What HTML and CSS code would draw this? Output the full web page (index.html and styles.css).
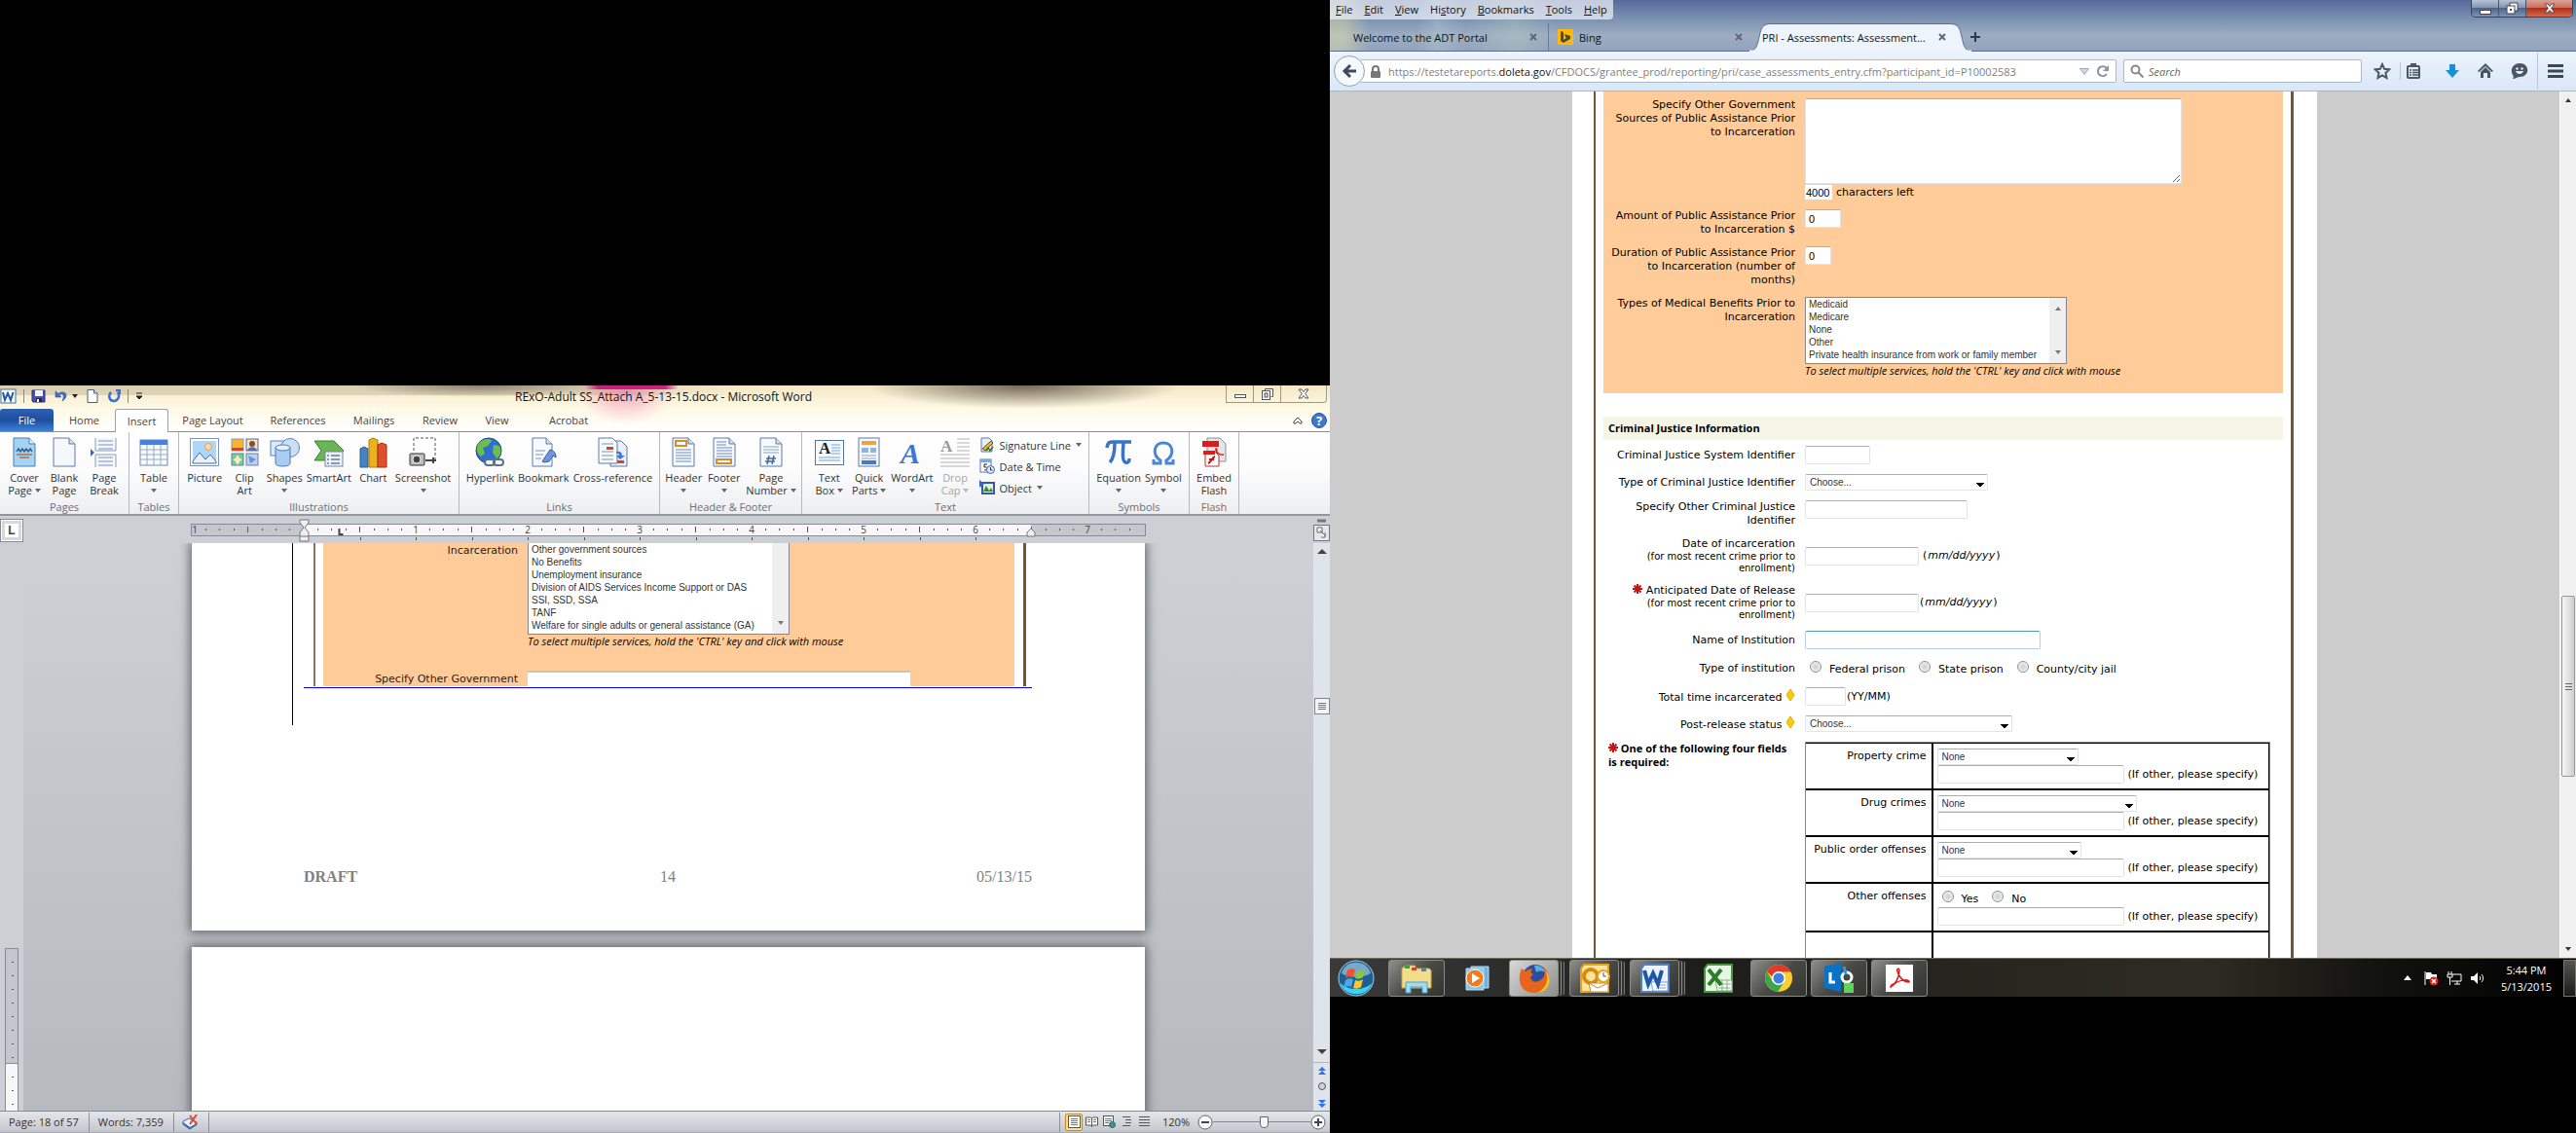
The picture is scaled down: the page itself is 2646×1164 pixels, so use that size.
FILE: index.html
```html
<!DOCTYPE html>
<html lang="en">
<head>
  <meta charset="UTF-8">
  <meta name="viewport" content="width=device-width, initial-scale=1.0">
  <title>Desktop</title>
  <link rel="stylesheet" href="styles.css">
</head>
<body>
  <div class="desktop">

    <!-- Left monitor: Word -->
    <section class="screen screen-left">
      <div class="word">
        <div class="word-top">
          <div class="word-title">
            <div class="quick-access">
              <svg width="17" height="16" viewBox="0 0 17 16"><rect x="1" y="1" width="15" height="14" fill="#fff" stroke="#3b6fb5"/><path d="M3 4l2 8 3-7 3 7 2.500-8" fill="none" stroke="#1f5aa8" stroke-width="2"/></svg>
              <i class="qa-sep"></i>
              <svg width="15" height="14" viewBox="0 0 15 14"><path d="M1 1h13v12H2l-1-1z" fill="#4a4fb5" stroke="#2c2f7d"/><rect x="4" y="1" width="8" height="6" fill="#f1f3fb"/><rect x="5" y="9" width="6" height="4" fill="#23244e"/><rect x="6" y="10" width="2" height="3" fill="#fff"/></svg>
              <svg class="qa-gap" width="14" height="14" viewBox="0 0 14 14"><path d="M1 2v6h6L5 6c3-3 6 0 3 6 6-4 5-10-1-9-1 0-2 .5-3 1.500z" fill="#3c6fd2" stroke="#2350a4" stroke-width=".6"/></svg>
              <svg width="6" height="4" viewBox="0 0 6 4"><path d="M0 0h6L3 4z" fill="#222"/></svg>
              <svg class="qa-gap" width="12" height="14" viewBox="0 0 12 14"><path d="M1 .5h6.500L11 4v9.500H1z" fill="#fff" stroke="#4b5f80"/><path d="M7.500.5V4H11" fill="#d6e0ef" stroke="#4b5f80"/></svg>
              <svg class="qa-gap" width="14" height="14" viewBox="0 0 14 14"><path d="M9 1h4v4M11 3c3 5-1 9-4 9-5 0-6-6-3-9" fill="none" stroke="#3c6fd2" stroke-width="2.500"/></svg>
              <i class="qa-sep"></i>
              <svg width="8" height="8" viewBox="0 0 8 8"><path d="M1 1h6M1 4h6L4 7z" fill="#222" stroke="#222"/></svg>
            </div>
            <h1 class="word-name">RExO-Adult SS_Attach A_5-13-15.docx - Microsoft Word</h1>
            <div class="win-buttons">
              <button aria-label="Minimize"><svg width="12" height="10" viewBox="0 0 12 10"><rect x=".5" y="5.500" width="11" height="3" fill="#fff" stroke="#555"/></svg></button>
              <button aria-label="Restore"><svg width="12" height="12" viewBox="0 0 12 12"><path d="M3.500 2.500v-2h8v8h-2" fill="#fff" stroke="#555"/><rect x=".5" y="2.500" width="8" height="9" fill="#fff" stroke="#555"/><rect x="3" y="5" width="3" height="4" fill="#ddd" stroke="#555"/></svg></button>
              <button class="wide" aria-label="Close"><svg width="12" height="11" viewBox="0 0 12 11"><path d="M1 1h3l2 2.500L8 1h3L7.700 5.500 11 10H8L6 7.500 4 10H1l3.300-4.500z" fill="#fff" stroke="#555"/></svg></button>
            </div>
          </div>
          <div class="ribbon-tabs">
            <button class="tab-file">File</button>
            <button class="tab-home">Home</button>
            <button class="tab-active">Insert</button>
            <button class="tab-layout">Page Layout</button>
            <button class="tab-refs">References</button>
            <button class="tab-mail">Mailings</button>
            <button class="tab-review">Review</button>
            <button class="tab-view">View</button>
            <button>Acrobat</button>
            <span class="tabs-end">
              <svg width="10" height="8" viewBox="0 0 10 8"><path d="M1 5l4-4 4 4v2H7L5 5 3 7H1z" fill="#fff" stroke="#444"/></svg>
              <svg width="16" height="16" viewBox="0 0 16 16"><circle cx="8" cy="8" r="7.500" fill="#3f78cf" stroke="#2a569c"/><text x="8" y="13" text-anchor="middle" class="help-mark">?</text></svg>
            </span>
          </div>
        </div>

        <div class="ribbon">
          <div class="group g-pages">
            <div class="tools">
              <button class="tool"><svg width="32" height="32" viewBox="0 0 32 32"><path d="M5 1h16l6 6v23H5z" fill="#a5d3f5" stroke="#4a7fb0"/><path d="M21 1v6h6" fill="#e9f4fd" stroke="#4a7fb0"/><path d="M8 15l2-3 2 3 2-3 2 3 2-3 2 3 2-3 2 3" fill="none" stroke="#35618e" stroke-width="1.500"/><path d="M8 18h16M11 21h10" stroke="#b0713c" stroke-width="1.500"/></svg>Cover<br>Page <i class="caret"></i></button>
              <button class="tool"><svg width="32" height="32" viewBox="0 0 32 32"><path d="M5 1h16l6 6v23H5z" fill="#f4f8fd" stroke="#5c7ba6"/><path d="M21 1v6h6" fill="#d3e0f2" stroke="#5c7ba6"/></svg>Blank<br>Page</button>
              <button class="tool"><svg width="32" height="32" viewBox="0 0 32 32"><path d="M7 1v13h21V1M7 31V18h21v13" fill="#f3f7fc" stroke="#8b9cb5"/><path d="M10 4h15M10 8h15M10 12h15M10 21h15M10 25h15M10 29h15" stroke="#7b93bd"/><path d="M2 12l4 4-4 4z" fill="#3768c4"/></svg>Page<br>Break</button>
            </div>
            <h2>Pages</h2>
          </div>
          <div class="group g-tables">
            <div class="tools">
              <button class="tool"><svg width="32" height="32" viewBox="0 0 32 32"><rect x="2" y="3" width="28" height="26" fill="#f7fafe" stroke="#7089ad"/><rect x="2" y="3" width="28" height="5" fill="#4a7fdc"/><path d="M2 13h28M2 18h28M2 23h28M9 8v21M16 8v21M23 8v21" stroke="#98a9c2"/></svg>Table<br><i class="caret"></i></button>
            </div>
            <h2>Tables</h2>
          </div>
          <div class="group g-illus">
            <div class="tools">
              <button class="tool"><svg width="32" height="32" viewBox="0 0 32 32"><rect x="1.500" y="1.500" width="29" height="28" fill="#fff" stroke="#7d93b3"/><rect x="4" y="4" width="24" height="23" fill="#aed6f8"/><circle cx="20" cy="10" r="3.500" fill="#ffd9a8" stroke="#f09a58"/><path d="M4 25l7-9 6 7 5-5 6 7v2H4z" fill="#eaf1fb" stroke="#496b9d"/></svg>Picture</button>
              <button class="tool"><svg width="32" height="32" viewBox="0 0 32 32"><rect x="3" y="2" width="12" height="12" fill="#f6b42f" stroke="#8a9ab2"/><path d="M3 11h12v3H3z" fill="#c44f28"/><rect x="18" y="2" width="12" height="12" fill="#efe2d2" stroke="#5d6b82"/><circle cx="24" cy="7" r="3" fill="#8a4d27"/><path d="M19 14c1-5 9-5 10 0z" fill="#5a6fa5"/><rect x="3" y="17" width="12" height="12" fill="#79c8b0" stroke="#5d8a7e"/><path d="M9 18l2 4 3 1-3 2-2 4-2-4-3-2 3-1z" fill="#fff6ae"/><rect x="18" y="17" width="12" height="12" fill="#bcd1f2" stroke="#6982ab"/><path d="M20 19l8 4-6 4z" fill="#6d90d8"/></svg>Clip<br>Art</button>
              <button class="tool"><svg width="32" height="32" viewBox="0 0 32 32"><rect x="2" y="4" width="16" height="15" fill="#dbe9f8" stroke="#5b84b9"/><circle cx="22" cy="11" r="9.500" fill="#cbdff5" stroke="#5b84b9"/><path d="M7 11v16c0 4 15 4 15 0V11z" fill="#a9ccf2" stroke="#4f7ab3"/><ellipse cx="14.500" cy="11" rx="7.500" ry="3" fill="#e7f1fc" stroke="#4f7ab3"/></svg>Shapes<br><i class="caret"></i></button>
              <button class="tool"><svg width="34" height="32" viewBox="0 0 34 32"><path d="M2 4h20l10 10-10 10H2l7-10z" fill="#6cb557" stroke="#37802d"/><rect x="13" y="15" width="18" height="15" fill="#eef2f8" stroke="#76869f"/><path d="M19 19h9M19 23h9M19 27h9M15 19h2M15 23h2M15 27h2" stroke="#697b98" stroke-width="1.500"/></svg>SmartArt</button>
              <button class="tool"><svg width="32" height="32" viewBox="0 0 32 32"><path d="M3 12l4-2 4 2v19H3z" fill="#4483c4" stroke="#27598e"/><path d="M12 3l4-2 5 2v28h-9z" fill="#eab31e" stroke="#a87a10"/><path d="M21 8l4-2 5 2v23h-9z" fill="#e0502e" stroke="#9c2d14"/></svg>Chart</button>
              <button class="tool"><svg width="34" height="32" viewBox="0 0 34 32"><path d="M7 14V1h22v22" fill="none" stroke="#555" stroke-dasharray="3 2"/><path d="M19 24h11M27 21v6" stroke="#444" stroke-width="2"/><rect x="3" y="17" width="15" height="12" rx="1" fill="#b8bfc6" stroke="#333"/><circle cx="10" cy="23" r="4" fill="#444" stroke="#eee"/></svg>Screenshot<br><i class="caret"></i></button>
            </div>
            <h2>Illustrations</h2>
          </div>
          <div class="group g-links">
            <div class="tools">
              <button class="tool"><svg width="32" height="32" viewBox="0 0 32 32"><circle cx="15" cy="14" r="13" fill="#2f6fd0" stroke="#1d4586"/><path d="M5 6c5-5 12-5 13-2l-4 5-5 2 2 6-4 3C3 17 1 12 5 6zM20 8l6 1c3 6 1 11-3 13l-4-6z" fill="#6cbf4a"/><path d="M12 26h14" stroke="#eef2f6" stroke-width="5"/><rect x="11" y="23" width="10" height="6" rx="3" fill="none" stroke="#60707f" stroke-width="2"/><rect x="20" y="23" width="10" height="6" rx="3" fill="none" stroke="#60707f" stroke-width="2"/></svg>Hyperlink</button>
              <button class="tool"><svg width="32" height="32" viewBox="0 0 32 32"><path d="M5 1h14l6 6v23H5z" fill="#f6f9fd" stroke="#5c7ba6"/><path d="M19 1v6h6" fill="#d3e0f2" stroke="#5c7ba6"/><path d="M8 14h10M8 18h8M8 22h6" stroke="#7b93bd"/><path d="M15 25l8-12c4 1 6 3 6 8l-3-2-4 6-5 1z" fill="#6f98dc" stroke="#35599c"/></svg>Bookmark</button>
              <button class="tool"><svg width="32" height="32" viewBox="0 0 32 32"><path d="M14 4h11l6 6v20H14z" fill="#e9f0f9" stroke="#5c7ba6"/><path d="M2 1h14l5 5v21H2z" fill="#f8fbfe" stroke="#5c7ba6"/><path d="M5 7h12M5 15h12M5 19h12M5 23h12" stroke="#7b93bd"/><rect x="10" y="10" width="7" height="3" fill="#d6431e"/><rect x="21" y="24" width="7" height="3" fill="#d6431e"/><path d="M20 15c4-1 6 1 6 4h3l-5 4-4-4h3c0-2-1-3-3-2z" fill="#3f78cf"/></svg>Cross-reference</button>
            </div>
            <h2>Links</h2>
          </div>
          <div class="group g-header">
            <div class="tools">
              <button class="tool"><svg width="32" height="32" viewBox="0 0 32 32"><path d="M5 1h16l6 6v23H5z" fill="#f6f9fd" stroke="#5c7ba6"/><path d="M21 1v6h6" fill="#d3e0f2" stroke="#5c7ba6"/><rect x="8" y="4" width="11" height="5" fill="#fff" stroke="#d98a2b" stroke-width="2"/><path d="M8 13h16M8 16h16M8 19h16M8 22h16M8 25h16" stroke="#6d8dc4"/></svg>Header<br><i class="caret"></i></button>
              <button class="tool"><svg width="32" height="32" viewBox="0 0 32 32"><path d="M5 1h16l6 6v23H5z" fill="#f6f9fd" stroke="#5c7ba6"/><path d="M21 1v6h6" fill="#d3e0f2" stroke="#5c7ba6"/><rect x="8" y="23" width="15" height="4" fill="#fff" stroke="#d98a2b" stroke-width="2"/><path d="M8 5h10M8 8h10M8 11h16M8 14h16M8 17h16M8 20h16" stroke="#6d8dc4"/></svg>Footer<br><i class="caret"></i></button>
              <button class="tool"><svg width="32" height="32" viewBox="0 0 32 32"><path d="M5 1h16l6 6v23H5z" fill="#f6f9fd" stroke="#5c7ba6"/><path d="M21 1v6h6" fill="#d3e0f2" stroke="#5c7ba6"/><path d="M8 10h16M8 13h16M8 16h16" stroke="#8fa3bd"/><path d="M14 19l-2 9M19 19l-2 9M11 22h10M10 25h10" stroke="#44699f" stroke-width="1.500"/></svg>Page<br>Number <i class="caret"></i></button>
            </div>
            <h2>Header &amp; Footer</h2>
          </div>
          <div class="group g-text">
            <div class="tools">
              <button class="tool"><svg width="32" height="32" viewBox="0 0 32 32"><rect x="1.500" y="3.500" width="29" height="25" fill="#f6fafe" stroke="#54749f"/><path d="M18 8h9M18 11h9M18 14h9M18 17h9M5 21h22M5 24h22" stroke="#7aa0d0"/><text x="5" y="17" class="serif-a">A</text></svg>Text<br>Box <i class="caret"></i></button>
              <button class="tool"><svg width="32" height="32" viewBox="0 0 32 32"><rect x="5" y="1" width="21" height="29" fill="#f6f9fd" stroke="#5c7ba6"/><rect x="8" y="4" width="15" height="4" fill="#f1a33a"/><path d="M8 11h7v5H8zM17 11h6v5h-6z" fill="#91b2e2"/><path d="M8 19h15M8 22h15" stroke="#8fa3bd"/><path d="M8 24h15v4H8z" fill="#4578cd"/></svg>Quick<br>Parts <i class="caret"></i></button>
              <button class="tool"><svg width="32" height="32" viewBox="0 0 32 32"><text x="4" y="27" class="art-a">A</text></svg>WordArt<br><i class="caret"></i></button>
              <button class="tool off"><svg width="32" height="32" viewBox="0 0 32 32"><path d="M18 2h13M18 6h13M18 10h13M18 14h13M1 18h30M1 22h30M1 26h30M1 30h30" stroke="#b3b3b3"/><text x="1" y="15" class="serif-a grey-a">A</text></svg>Drop<br>Cap <i class="caret"></i></button>
              <div class="tool-list">
                <button><svg width="16" height="16" viewBox="0 0 16 16"><path d="M2 1h8l3 3v11H2z" fill="#e8eef7" stroke="#5c7ba6"/><path d="M3 12l9-8 2 2-8 8z" fill="#eab734" stroke="#6c5312"/><path d="M7 14l2-3 2 3 3-4" fill="none" stroke="#356c2b" stroke-width="1.500"/></svg>Signature Line <i class="caret"></i></button>
                <button><svg width="16" height="16" viewBox="0 0 16 16"><rect x="1" y="1" width="11" height="13" fill="#fff" stroke="#5079bb"/><rect x="1" y="1" width="11" height="3" fill="#7ea7e2"/><path d="M8 6H5v3c4-1 4 3 0 3" fill="none" stroke="#222"/><circle cx="11.500" cy="11.500" r="4" fill="#d9e8fa" stroke="#3f69ab"/><path d="M11.500 9v3h2" fill="none" stroke="#234"/></svg>Date &amp; Time</button>
                <button><svg width="16" height="16" viewBox="0 0 16 16"><rect x="3" y="3" width="12" height="11" fill="#e8f1e5" stroke="#35599c" stroke-width="2"/><path d="M4 12l3-6 3 5 2-3 2 4z" fill="#3c8a36"/><path d="M0 0l5 4-5 4z" fill="#3768c4"/></svg>Object <i class="caret"></i></button>
              </div>
            </div>
            <h2>Text</h2>
          </div>
          <div class="group g-symbols">
            <div class="tools">
              <button class="tool"><svg width="32" height="32" viewBox="0 0 32 32"><path d="M4 11c1-6 3-6 6-6h19M12 6c0 10-1 16-5 20M21 6c-1 12-1 19 2 20 3 1 4-1 4-4" fill="none" stroke="#3a73c9" stroke-width="3.500"/></svg>Equation<br><i class="caret"></i></button>
              <button class="tool"><svg width="32" height="32" viewBox="0 0 32 32"><path d="M6 23v4h7v-3C4 18 6 6 16 6s12 12 3 18v3h7v-4" fill="none" stroke="#4a84d6" stroke-width="3"/></svg>Symbol<br><i class="caret"></i></button>
            </div>
            <h2>Symbols</h2>
          </div>
          <div class="group g-flash">
            <div class="tools">
              <button class="tool"><svg width="32" height="32" viewBox="0 0 32 32"><path d="M9 1h13l6 6v18H9z" fill="#e6e6e6" stroke="#8f8f8f"/><path d="M4 4h17v6H4z" fill="#e11b1b"/><path d="M16 20c4-3 3-9 2-8-1 3 4 7 8 6" fill="none" stroke="#d22" stroke-width="1.500"/><path d="M7 16h11l3 3v11H7z" fill="#fff" stroke="#b33"/><path d="M5 14h12v4H5z" fill="#e11b1b"/><path d="M10 27c3-1 4-6 7-7M11 23h5" fill="none" stroke="#c11" stroke-width="2"/></svg>Embed<br>Flash</button>
            </div>
            <h2>Flash</h2>
          </div>
        </div>

        <div class="ruler-row">
          <span class="tab-stop">L</span>
          <div class="ruler-wrap">
            <svg class="ruler" width="981" height="25" viewBox="0 0 981 25">
              <defs>
                <pattern id="ticks" x="116" y="0" width="115" height="25" patternUnits="userSpaceOnUse">
                  <path d="M14.500 10v2M28.500 10v2M43.500 10v2M57.500 8v6M72.500 10v2M86.500 10v2M100.500 10v2" stroke="#555"/>
                </pattern>
              </defs>
              <rect x=".5" y="5.500" width="980" height="12" fill="#c3c8ce" stroke="#868b93"/>
              <rect x="116" y="6" width="747" height="11" fill="#f7f7f7"/>
              <rect x="1" y="6" width="965" height="11" fill="url(#ticks)"/>
              <path d="M174.500 19v3M231.500 19v3M289.500 19v3M346.500 19v3M404.500 19v3M461.500 19v3M519.500 19v3M576.500 19v3M634.500 19v3M691.500 19v3M749.500 19v3M806.500 19v3" stroke="#555"/>
              <path d="M112 1h9v3l-4 5 4 5v9h-9v-9l4-5-4-5zM112 18h9" fill="#eee" stroke="#777"/>
              <path d="M863 10l4 4v4h-8v-4z" fill="#eee" stroke="#777"/>
              <path d="M152.500 10v6h4" fill="none" stroke="#444" stroke-width="2"/>
              <g class="ruler-num">
                <text x="4" y="15">1</text><text x="231" y="15">1</text><text x="346" y="15">2</text><text x="461" y="15">3</text><text x="576" y="15">4</text><text x="691" y="15">5</text><text x="806" y="15">6</text><text x="921" y="15">7</text>
              </g>
            </svg>
          </div>
          <span class="select-object"><svg width="17" height="24" viewBox="0 0 17 24"><path d="M4 2h9" stroke="#777" stroke-width="3"/><rect x=".5" y="6.500" width="16" height="16" fill="#e4e7ec" stroke="#777"/><path d="M4 9h5v5H4zM7 12l6 6M12 14v5H8" fill="#fff" stroke="#666"/></svg></span>
        </div>

        <div class="workspace">
          <div class="v-ruler"><div class="v-margin"></div><div class="v-body"></div></div>
          <div class="canvas">
            <article class="page page-one">
              <div class="changed">
                <div class="figure">
                  <div class="shot">
                    <div class="shot-body">
                      <div class="field shot-field">
                        <label for="benefits">Incarceration</label>
                        <div>
                          <div class="listbox cut-top">
                            <select id="benefits" multiple size="7">
                              <option>Other government sources</option>
                              <option>No Benefits</option>
                              <option>Unemployment insurance</option>
                              <option>Division of AIDS Services Income Support or DAS</option>
                              <option>SSI, SSD, SSA</option>
                              <option>TANF</option>
                              <option>Welfare for single adults or general assistance (GA)</option>
                            </select>
                            <span class="list-scroll"><i></i><i class="arrow-down"></i></span>
                          </div>
                          <p class="note">To select multiple services, hold the 'CTRL' key and click with mouse</p>
                        </div>
                      </div>
                      <div class="field shot-field">
                        <label for="other-doc">Specify Other Government</label>
                        <input id="other-doc" class="doc-input" type="text">
                      </div>
                    </div>
                  </div>
                </div>
              </div>
              <footer class="page-footer"><b>DRAFT</b><span>14</span><span class="footer-date">05/13/15</span></footer>
            </article>
            <article class="page page-two"></article>
          </div>
          <div class="word-scroll">
            <i class="tri-up"></i>
            <span class="word-thumb"><i></i></span>
            <i class="tri-down"></i>
            <svg class="browse" width="17" height="50" viewBox="0 0 17 50"><path d="M0 .5h17" stroke="#b1b5bd"/><path d="M5 9l4-4 4 4zM5 13l4-4 4 4z" fill="#2f6ff0"/><circle cx="9" cy="25" r="3.500" fill="#cfd3d9" stroke="#555"/><path d="M5 39h8l-4 4zM5 43h8l-4 4z" fill="#2f6ff0"/></svg>
          </div>
        </div>

        <div class="statusbar">
          <span class="stat">Page: 18 of 57</span>
          <span class="stat">Words: 7,359</span>
          <span class="stat stat-icon"><svg width="17" height="16" viewBox="0 0 17 16"><path d="M1 7l6-3 8 4v2l-7 5-7-5z" fill="#e9effa" stroke="#3f69b5"/><path d="M1 9l7 5 7-4" fill="none" stroke="#3f69b5" stroke-width="2"/><path d="M8 1l7 9M15 0L8 10" stroke="#e4452a" stroke-width="2"/></svg></span>
          <div class="views">
            <button class="view on" aria-label="Print layout"><svg width="13" height="13" viewBox="0 0 13 13"><rect x=".5" y=".5" width="12" height="12" fill="#fff" stroke="#555"/><path d="M3 3.500h7M3 5.500h7M3 7.500h7M3 9.500h7" stroke="#777"/></svg></button>
            <button class="view" aria-label="Reading"><svg width="13" height="13" viewBox="0 0 13 13"><path d="M.5 2h5l1 1 1-1h5v8h-5l-1 1-1-1h-5zM6.500 3v9" fill="#fff" stroke="#555"/><path d="M2 4.500h3M2 6.500h3M8 4.500h3M8 6.500h3" stroke="#777"/></svg></button>
            <button class="view" aria-label="Web layout"><svg width="13" height="13" viewBox="0 0 13 13"><rect x=".5" y=".5" width="10" height="10" fill="#fff" stroke="#555"/><path d="M2 3.500h7M2 5.500h7M2 7.500h4" stroke="#777"/><circle cx="9.500" cy="9.500" r="3" fill="#4a9a5a" stroke="#2858a0"/></svg></button>
            <button class="view" aria-label="Outline"><svg width="13" height="13" viewBox="0 0 13 13"><path d="M2 1.500h8M5 4.500h6M5 7.500h6M2 10.500h8" stroke="#555"/></svg></button>
            <button class="view" aria-label="Draft"><svg width="13" height="13" viewBox="0 0 13 13"><path d="M1 1.500h11M1 4.500h11M1 7.500h11M1 10.500h11" stroke="#555"/></svg></button>
            <span class="zoom-text">120%</span>
            <button class="round" aria-label="Zoom out"><svg width="16" height="16" viewBox="0 0 16 16"><circle cx="8" cy="8" r="7" fill="#f7f8f9" stroke="#666"/><path d="M4 8h8" stroke="#444" stroke-width="2"/></svg></button>
            <input class="zoom-range" type="range" min="10" max="230" value="125" aria-label="Zoom">
            <button class="round" aria-label="Zoom in"><svg width="16" height="16" viewBox="0 0 16 16"><circle cx="8" cy="8" r="7" fill="#f7f8f9" stroke="#666"/><path d="M4 8h8M8 4v8" stroke="#444" stroke-width="2"/></svg></button>
          </div>
        </div>
      </div>
    </section>

    <!-- Right monitor: Firefox and the taskbar -->
    <section class="screen screen-right">
      <div class="browser">
        <header class="chrome">
          <div class="menu-row">
            <nav class="menu">
              <a href="#"><u>F</u>ile</a><a href="#"><u>E</u>dit</a><a href="#"><u>V</u>iew</a><a href="#">Hi<u>s</u>tory</a><a href="#"><u>B</u>ookmarks</a><a href="#"><u>T</u>ools</a><a href="#"><u>H</u>elp</a>
            </nav>
            <div class="aero">
              <button aria-label="Minimize"><svg width="12" height="12" viewBox="0 0 12 12"><rect x=".5" y="7.500" width="11" height="4" fill="#fff" stroke="#445"/></svg></button>
              <button aria-label="Restore"><svg width="13" height="13" viewBox="0 0 13 13"><path d="M4 4V1h8v8H9" fill="#fff" stroke="#445"/><rect x="1" y="4" width="8" height="8" fill="#fff" stroke="#445"/><rect x="4" y="7" width="2" height="2" fill="#445"/></svg></button>
              <button class="aero-close" aria-label="Close"><svg width="12" height="11" viewBox="0 0 12 11"><path d="M1 1h3l2 2.500L8 1h3L7.700 5.500 11 10H8L6 7.500 4 10H1l3.300-4.500z" fill="#fff" stroke="#545"/></svg></button>
            </div>
          </div>
          <div class="tabs">
            <div class="tab tab-one"><span>Welcome to the ADT Portal</span><button class="close" aria-label="Close tab"><svg width="8" height="8" viewBox="0 0 8 8"><path d="M1 1l6 6M7 1L1 7"/></svg></button></div>
            <div class="tab tab-two"><svg width="16" height="16" viewBox="0 0 16 16"><rect width="16" height="16" fill="#ffb900"/><path d="M3 2l3 1v8l3-2-1-1-1-3 6 2v3l-7 4-3-2z" fill="#4a4a4a"/></svg><span>Bing</span><button class="close" aria-label="Close tab"><svg width="8" height="8" viewBox="0 0 8 8"><path d="M1 1l6 6M7 1L1 7"/></svg></button></div>
            <div class="tab tab-current">
              <svg class="tab-shape" width="228" height="29" viewBox="0 0 228 29"><path d="M0 28.500C8 28 8 21 10 14 12 4 14 .5 22 .5h184c8 0 10 3.500 12 13.500 2 7 2 14 10 14.500z" fill="#edf4fb" stroke="#5d6f8e"/><path d="M0 28.500h228" stroke="#edf4fb" stroke-width="2"/></svg>
              <span>PRI - Assessments: Assessment...</span><button class="close" aria-label="Close tab"><svg width="8" height="8" viewBox="0 0 8 8"><path d="M1 1l6 6M7 1L1 7"/></svg></button>
            </div>
            <button class="new-tab" aria-label="New tab"><svg width="12" height="12" viewBox="0 0 12 12"><path d="M6 1v10M1 6h10" stroke="#2d3a4e" stroke-width="2"/></svg></button>
          </div>
          <div class="navbar">
            <button class="back" aria-label="Back"><svg width="16" height="16" viewBox="0 0 16 16"><path d="M9 2L3 8l6 6M3 8h12" fill="none" stroke="#3d4a5c" stroke-width="3"/></svg></button>
            <div class="urlbar">
              <svg width="12" height="13" viewBox="0 0 12 13"><rect x="1" y="6" width="10" height="7" rx="1" fill="#777"/><path d="M3 6V4c0-4 6-4 6 0v2" fill="none" stroke="#777" stroke-width="2"/></svg>
              <span class="url">https://testetareports.<b>doleta.gov</b>/CFDOCS/grantee_prod/reporting/pri/case_assessments_entry.cfm?participant_id=P10002583</span>
              <svg width="10" height="7" viewBox="0 0 10 7"><path d="M.5.5h9L5 6.500z" fill="#d5dae2" stroke="#9ba5b5"/></svg>
              <svg width="14" height="14" viewBox="0 0 14 14"><path d="M11 10c-3 4-9 2-9-3s6-6 9-3" fill="none" stroke="#8894a6" stroke-width="2"/><path d="M13 1v6H7z" fill="#8894a6"/></svg>
            </div>
            <div class="searchbar">
              <svg width="14" height="14" viewBox="0 0 14 14"><circle cx="5.500" cy="5.500" r="4" fill="none" stroke="#888" stroke-width="2"/><path d="M8.500 8.500l5 5" stroke="#888" stroke-width="2"/></svg>
              <input type="text" placeholder="Search" aria-label="Search">
            </div>
            <div class="nav-icons">
              <svg width="18" height="18" viewBox="0 0 18 18"><path d="M9 2l2.200 4.800 5 .6-3.700 3.500 1 5.100L9 13.500 4.500 16l1-5.100L1.800 7.400l5-.6z" fill="none" stroke="#4a5565" stroke-width="2"/></svg>
              <i class="nav-sep"></i>
              <svg class="nav-clip" width="18" height="18" viewBox="0 0 18 18"><rect x="3" y="4" width="12" height="12" rx="1" fill="none" stroke="#4a5565" stroke-width="2"/><path d="M6 1h6v3H6z" fill="#4a5565"/><path d="M5 8h2M8 8h6M5 10.500h2M8 10.500h6M5 13h2M8 13h6" stroke="#4a5565" stroke-width="1.500"/></svg>
              <svg width="18" height="18" viewBox="0 0 18 18"><path d="M6 2h6v6h4l-7 8-7-8h4z" fill="#1b8fd6"/></svg>
              <svg width="18" height="18" viewBox="0 0 18 18"><path d="M1 9l8-8 8 8-1.500 1L9 4 2.500 10zM4 10l5-5 5 5v6h-3v-5H7v5H4z" fill="#4a5565"/></svg>
              <svg width="18" height="18" viewBox="0 0 18 18"><path d="M9 1c11 0 11 14 0 14-2 0-4 2-7 2 1-2 1-3 0-4C-1 8 2 1 9 1z" fill="#4a5565"/><circle cx="6.500" cy="6.500" r="1.200" fill="#e6eff9"/><circle cx="11.500" cy="6.500" r="1.200" fill="#e6eff9"/><path d="M5 9h8c-1 4-7 4-8 0z" fill="#e6eff9"/></svg>
              <i class="nav-sep tall"></i>
              <svg width="18" height="18" viewBox="0 0 18 18"><path d="M1 3.500h16M1 9h16M1 14.500h16" stroke="#3d4856" stroke-width="3"/></svg>
            </div>
          </div>
        </header>

        <div class="viewport">
          <main class="sheet">
            <form class="frame">
              <fieldset class="assist">
                <div class="field">
                  <label for="sources">Specify Other Government Sources of Public Assistance Prior to Incarceration</label>
                  <div>
                    <textarea id="sources"></textarea>
                    <div class="counter"><input type="text" value="4000" aria-label="Characters left"> characters left</div>
                  </div>
                </div>
                <div class="field">
                  <label for="amount">Amount of Public Assistance Prior to Incarceration $</label>
                  <input id="amount" class="w-amount" type="text" value="0">
                </div>
                <div class="field">
                  <label for="duration">Duration of Public Assistance Prior to Incarceration (number of months)</label>
                  <input id="duration" class="w-duration" type="text" value="0">
                </div>
                <div class="field">
                  <label for="medical">Types of Medical Benefits Prior to Incarceration</label>
                  <div>
                    <div class="listbox">
                      <select id="medical" multiple size="5">
                        <option>Medicaid</option>
                        <option>Medicare</option>
                        <option>None</option>
                        <option>Other</option>
                        <option>Private health insurance from work or family member</option>
                      </select>
                      <span class="list-scroll"><i class="arrow-up"></i><i class="arrow-down"></i></span>
                    </div>
                    <p class="note">To select multiple services, hold the 'CTRL' key and click with mouse</p>
                  </div>
                </div>
              </fieldset>

              <h2 class="section-title">Criminal Justice Information</h2>
              <div class="field mid">
                <label for="cj-id">Criminal Justice System Identifier</label>
                <input id="cj-id" class="w-id" type="text">
              </div>
              <div class="field mid">
                <label for="cj-type">Type of Criminal Justice Identifier</label>
                <select id="cj-type" class="drop w-type"><option>Choose...</option></select>
              </div>
              <div class="field">
                <label for="cj-other">Specify Other Criminal Justice Identifier</label>
                <input id="cj-other" class="w-other" type="text">
              </div>
              <div class="field mid">
                <label for="date-in">Date of incarceration<small>(for most recent crime prior to enrollment)</small></label>
                <div class="line spaced"><input id="date-in" class="w-date" type="text">(<em>mm/dd/yyyy</em>)</div>
              </div>
              <div class="field mid">
                <label for="date-out"><svg width="10" height="10" viewBox="0 0 10 10"><path d="M5 0v10M0 5h10M1.500 1.500l7 7M8.500 1.500l-7 7" stroke="#c81414" stroke-width="2"/></svg> Anticipated Date of Release<small>(for most recent crime prior to enrollment)</small></label>
                <div class="line"><input id="date-out" class="w-date" type="text">(<em>mm/dd/yyyy</em>)</div>
              </div>
              <div class="field mid">
                <label for="inst">Name of Institution</label>
                <input id="inst" class="w-inst focused" type="text">
              </div>
              <div class="field mid">
                <span class="label">Type of institution</span>
                <div class="line radios">
                  <label><input type="radio" name="inst-type"> Federal prison</label>
                  <label><input type="radio" name="inst-type"> State prison</label>
                  <label><input type="radio" name="inst-type"> County/city jail</label>
                </div>
              </div>
              <div class="field mid">
                <label for="total">Total time incarcerated <svg width="10" height="12" viewBox="0 0 10 12"><path d="M5 0l4 6-4 6-4-6z" fill="#fc0" stroke="#e0b000"/></svg></label>
                <div class="line"><input id="total" class="w-total" type="text">(YY/MM)</div>
              </div>
              <div class="field mid">
                <label for="post">Post-release status <svg width="10" height="12" viewBox="0 0 10 12"><path d="M5 0l4 6-4 6-4-6z" fill="#fc0" stroke="#e0b000"/></svg></label>
                <select id="post" class="drop w-post"><option>Choose...</option></select>
              </div>
              <div class="field">
                <strong class="required"><svg width="10" height="10" viewBox="0 0 10 10"><path d="M5 0v10M0 5h10M1.500 1.500l7 7M8.500 1.500l-7 7" stroke="#c81414" stroke-width="2"/></svg> One of the following four fields is required:</strong>
                <table class="crimes">
                  <tr>
                    <th><label for="property">Property crime</label></th>
                    <td><select id="property" class="drop w-property"><option>None</option></select><div class="line spaced"><input class="w-spec" id="property-o" type="text"><label for="property-o">(If other, please specify)</label></div></td>
                  </tr>
                  <tr>
                    <th><label for="drug">Drug crimes</label></th>
                    <td><select id="drug" class="drop w-drug"><option>None</option></select><div class="line spaced"><input class="w-spec" id="drug-o" type="text"><label for="drug-o">(If other, please specify)</label></div></td>
                  </tr>
                  <tr>
                    <th><label for="order">Public order offenses</label></th>
                    <td><select id="order" class="drop w-order"><option>None</option></select><div class="line spaced"><input class="w-spec" id="order-o" type="text"><label for="order-o">(If other, please specify)</label></div></td>
                  </tr>
                  <tr>
                    <th>Other offenses</th>
                    <td><div class="line radios"><label><input type="radio" name="off"> Yes</label><label><input type="radio" name="off"> No</label></div><div class="line spaced"><input class="w-spec" id="off-o" type="text"><label for="off-o">(If other, please specify)</label></div></td>
                  </tr>
                  <tr class="last"><th></th><td></td></tr>
                </table>
              </div>
            </form>
          </main>
          <div class="page-scroll"><i class="arrow-up"></i><span class="before"></span><span class="page-thumb"></span><span class="after"></span><i class="arrow-down"></i></div>
        </div>
      </div>

      <div class="taskbar">
        <button class="start" aria-label="Start"><svg width="38" height="38" viewBox="0 0 38 38"><circle cx="19" cy="19" r="18" fill="#1d5f92" stroke="#9ed0ea"/><path d="M3 24c8 8 24 8 32 0-3 15-29 15-32 0z" fill="#40d0f2"/><path d="M4 14C8-1 30-1 34 14c-9 5-21 5-30 0z" fill="#79a9c9"/><path d="M10 11c3-2 5-2 8-1l-2 8c-3-1-5-1-8 1z" fill="#f0532a"/><path d="M20 11c3 1 5 1 8-1l-2 8c-3 2-5 2-8 1z" fill="#8cc63e"/><path d="M8 21c3-2 5-2 8-1l-2 8c-3-1-5-1-8 1z" fill="#4aa8e8"/><path d="M18 21c3 1 5 1 8-1l-2 8c-3 2-5 2-8 1z" fill="#fcc62e"/></svg></button>
        <button class="task t-explorer" aria-label="Explorer"><svg width="32" height="32" viewBox="0 0 32 32"><path d="M1 6l4-3h9l2 3h13l2 2v18H1z" fill="#f3dc8a" stroke="#c9a64b"/><path d="M4 3h5v3H4z" fill="#2fa543"/><path d="M11 5h5v3h-5z" fill="#d5402c"/><path d="M21 6h5v3h-5z" fill="#2d8fd8"/><path d="M5 31V20h22v11h-5v-6H10v6z" fill="#9fdcf5" stroke="#4b9fc8"/></svg></button>
        <button class="task flat t-media" aria-label="Media Player"><svg width="28" height="28" viewBox="0 0 28 28"><path d="M8 2h18v22H8z" fill="#6fb3df" stroke="#b9dcf0"/><path d="M3 4h18v22H3z" fill="#8cc4e8" stroke="#b9dcf0"/><circle cx="12" cy="14" r="9" fill="#f07c1f" stroke="#fff"/><path d="M9 9l8 5-8 5z" fill="#fff"/></svg></button>
        <button class="task lit stack t-firefox" aria-label="Firefox"><svg width="32" height="32" viewBox="0 0 32 32"><circle cx="17" cy="15" r="13" fill="#2b4f9e"/><path d="M16 3c5-1 10 3 12 7-4-2-8-2-10 0z" fill="#58b0e0"/><path d="M3 6l4 3c2-2 5-3 7-2-2 2-2 4 1 5l-3 3c1 5 6 6 10 3 6-3 6-11 1-15 12 6 11 27-7 28C1 31-2 17 3 6z" fill="#e8641b"/><path d="M27 8c5 8 1 20-9 23 16-1 16-17 9-23z" fill="#f9c22e"/></svg></button>
        <button class="task stack t-outlook" aria-label="Outlook"><svg width="32" height="32" viewBox="0 0 32 32"><path d="M5 2h25v28H2V6z" fill="#fbe3a0" stroke="#e5a21c" stroke-width="2"/><circle cx="12" cy="14" r="7" fill="none" stroke="#d88a0c" stroke-width="4"/><path d="M10 21h20v9H12z" fill="#fff" stroke="#b88a3a"/><path d="M10 21l9 5 11-5" fill="none" stroke="#b88a3a"/><circle cx="25" cy="14" r="6" fill="#fff" stroke="#e5a21c" stroke-width="2"/><path d="M25 10v4h3" fill="none" stroke="#555"/></svg></button>
        <button class="task stack t-word" aria-label="Word"><svg width="32" height="32" viewBox="0 0 32 32"><path d="M5 2h25v28H2V6z" fill="#eaf2fc" stroke="#4f82c4" stroke-width="2"/><path d="M12 20h17v9H14z" fill="#fff" stroke="#7f9dc8"/><path d="M17 23h10M17 26h10" stroke="#7f9dc8"/><path d="M5 8l4 14 5-11 5 11 4-14" fill="none" stroke="#1f56a8" stroke-width="4"/></svg></button>
        <button class="task flat t-excel" aria-label="Excel"><svg width="32" height="32" viewBox="0 0 32 32"><path d="M5 2h25v28H2V6z" fill="#e8f5e4" stroke="#3f9a3c" stroke-width="2"/><path d="M13 18h17v11H15z" fill="#fff" stroke="#7ab276"/><path d="M15 22h14M16 26h12M20 18v11M25 18v11" stroke="#7ab276"/><path d="M6 7l13 16M19 7L6 23" stroke="#2b7d2b" stroke-width="4"/></svg></button>
        <button class="task t-chrome" aria-label="Chrome"><svg width="32" height="32" viewBox="0 0 32 32"><circle cx="16" cy="16" r="14" fill="#f9cf2f"/><path d="M3.900 9A14 14 0 0 1 28.500 9.500H16L9 14z" fill="#dd3b2c"/><path d="M3.900 9A14 14 0 0 0 15 30l6-9-11-1z" fill="#3ba64b"/><circle cx="16" cy="16" r="7" fill="#fff"/><circle cx="16" cy="16" r="5.500" fill="#3f7fe0"/></svg></button>
        <button class="task t-lync" aria-label="Lync"><svg width="32" height="34" viewBox="0 0 32 34"><path d="M1 5l17-4v30L1 27z" fill="#0a72c6"/><path d="M7 11v10h5" fill="none" stroke="#fff" stroke-width="3"/><circle cx="24" cy="16" r="5" fill="none" stroke="#fff" stroke-width="3"/><path d="M21 5l2 8" stroke="#2a9be0" stroke-width="3"/><rect x="21" y="22" width="10" height="10" fill="#5fd35f"/></svg></button>
        <button class="task t-adobe" aria-label="Adobe Reader"><svg width="28" height="28" viewBox="0 0 28 28"><rect width="28" height="28" fill="#fff"/><path d="M5 23c4-2 9-9 9-17 0-3-3-2-2 1 1 5 6 11 12 11 1-3-8-3-14 1-3 1-5 3-5 4z" fill="none" stroke="#e01b1b" stroke-width="1.500"/></svg></button>
        <div class="tray">
          <svg class="tray-up" width="8" height="5" viewBox="0 0 8 5"><path d="M0 5l4-5 4 5z" fill="#fff"/></svg>
          <svg width="16" height="16" viewBox="0 0 16 16"><path d="M2 1v14" stroke="#fff"/><path d="M3 2h5l1 2h5v6H8L7 9H3z" fill="#fff"/><circle cx="11" cy="11" r="4.500" fill="#d8211c"/><path d="M9 9l4 4M13 9l-4 4" stroke="#fff" stroke-width="1.500"/></svg>
          <svg width="16" height="16" viewBox="0 0 16 16"><path d="M6 4h9v7H5M8 14h6M11 11v3M2 1v3M5 1v3M1 4h5v3H1zM3.500 7v8" fill="none" stroke="#fff"/></svg>
          <svg width="16" height="16" viewBox="0 0 16 16"><path d="M1 6h3l4-4v12l-4-4H1z" fill="#fff"/><path d="M10 6c1 1 1 3 0 4M12 4c2 2 2 6 0 8" fill="none" stroke="#fff"/></svg>
          <p class="clock">5:44 PM<br>5/13/2015</p>
          <button class="show-desktop" aria-label="Show desktop"></button>
        </div>
      </div>
    </section>
  </div>
</body>
</html>
```

FILE: styles.css
```css
* {
  box-sizing: border-box;
}

body {
  margin: 0;
  background-color: #000;
  font-family: "Open Sans", "Noto Sans", sans-serif;
  font-size: 11px;
  color: #222;
}

button,
input,
select,
textarea {
  font: inherit;
  color: inherit;
  margin: 0;
}

button {
  background: none;
  border: none;
  padding: 0;
}

h1,
h2,
p {
  margin: 0;
  font-size: 11px;
  font-weight: normal;
}

svg {
  display: block;
  flex-shrink: 0;
}

.desktop {
  display: grid;
  grid-template-columns: 1366fr 1280fr;
  height: 100vh;
  overflow: hidden;
}

.screen {
  display: flex;
  flex-direction: column;
  min-width: 0;
  min-height: 0;
}

.screen-left {
  padding-top: 396px;
}

.screen-right {
  padding-bottom: 140px;
}

/* Word */
.word {
  flex: 1;
  display: flex;
  flex-direction: column;
  min-height: 0;
}

.word-top {
  background:
    radial-gradient(ellipse 130px 12px at 36% 0, rgba(60, 50, 40, 0.5), transparent),
    linear-gradient(90deg, transparent 44%, rgba(196, 20, 120, 0.9) 45%, rgba(196, 20, 120, 0.9) 50%, transparent 51%) 0 0 / 100% 4px no-repeat,
    radial-gradient(ellipse 50px 36px at 47% 4px, rgba(230, 90, 160, 0.5), transparent),
    radial-gradient(ellipse 160px 24px at 77% 0, rgba(60, 50, 40, 0.7), transparent),
    linear-gradient(90deg, rgba(160, 150, 125, 0.3) 0, rgba(160, 150, 125, 0.3) 45%, transparent 55%) 0 0 / 100% 10px no-repeat,
    linear-gradient(#f3e7c6, #fffae6 50%, #fff);
}

.word-title {
  display: flex;
  align-items: center;
  height: 24px;
  padding-bottom: 2px;
}

.quick-access {
  display: flex;
  align-items: center;
  gap: 4px;
  flex: 1 0 0;
}

.qa-gap {
  margin-left: 5px;
}

.qa-sep {
  width: 1px;
  height: 14px;
  margin: 0 3px;
  background-color: #8c8c80;
}

.word-name {
  color: #111;
  font-size: 12px;
}

.win-buttons {
  flex: 1 0 0;
  display: flex;
  justify-content: flex-end;
  align-self: flex-start;
  padding-right: 3px;
}

.win-buttons button {
  width: 28px;
  height: 18px;
  display: flex;
  align-items: center;
  justify-content: center;
  border: 1px solid #9b988e;
  border-top: none;
  border-right: none;
}

.win-buttons .wide {
  width: 48px;
  border-right: 1px solid #9b988e;
  border-radius: 0 0 4px 0;
}

.ribbon-tabs {
  display: flex;
  height: 24px;
  border-bottom: 1px solid #8b9097;
}

.ribbon-tabs button {
  color: #444;
}

.ribbon-tabs .tab-file {
  width: 55px;
  background: linear-gradient(#2e62b4, #1d4ea0 50%, #3f81d8);
  border-radius: 3px 3px 0 0;
  color: #fff;
}

.ribbon-tabs .tab-home {
  width: 63px;
}

.ribbon-tabs .tab-active {
  width: 55px;
  height: 24px;
  background-color: #fff;
  border: 1px solid #9ba0a6;
  border-bottom: none;
  border-radius: 3px 3px 0 0;
}

.tab-layout {
  width: 91px;
}

.tab-refs {
  width: 84px;
}

.tab-mail {
  width: 72px;
}

.tab-review {
  width: 64px;
}

.tab-view {
  width: 53px;
  margin-right: 27px;
}

.tabs-end {
  margin-left: auto;
  display: flex;
  align-items: center;
  gap: 9px;
  padding-right: 3px;
}

.help-mark {
  font: bold 13px "Open Sans", sans-serif;
  fill: #fff;
}

.ribbon {
  display: flex;
  height: 86px;
  background: linear-gradient(#fff, #fbfbfc 50%, #eceef1);
  border-bottom: 2px solid #93979d;
}

.group {
  display: flex;
  flex-direction: column;
  justify-content: space-between;
  border-right: 1px solid #b5b8bc;
  white-space: nowrap;
}

.group h2 {
  text-align: center;
  color: #6a6f78;
  line-height: 15px;
}

.g-pages { width: 133px; }
.g-tables { width: 51px; }
.g-illus { width: 288px; }
.g-links { width: 206px; }
.g-header { width: 146px; }
.g-text { width: 295px; }
.g-symbols { width: 103px; }
.g-flash { width: 51px; }

.tools {
  display: flex;
  align-items: flex-start;
  justify-content: center;
  padding-top: 5px;
}

.tool {
  display: block;
  min-width: 41px;
  padding: 0 2px;
  line-height: 13px;
  text-align: center;
  color: #333;
}

.tool svg {
  margin: 0 auto 3px;
}

.tool.off {
  color: #a5a5a5;
}

.caret {
  display: inline-block;
  vertical-align: 2px;
  border: 3px solid transparent;
  border-top: 4px solid #666;
  border-bottom: none;
}

.off .caret {
  border-top-color: #b5b5b5;
}

.tool-list {
  display: flex;
  flex-direction: column;
  gap: 6px;
  padding-left: 4px;
}

.tool-list button {
  display: flex;
  align-items: center;
  gap: 5px;
  height: 16px;
  color: #333;
}

.serif-a {
  font: bold 17px "Liberation Serif", serif;
  fill: #222;
}

.grey-a {
  fill: #999;
}

.art-a {
  font: italic bold 30px "Liberation Serif", serif;
  fill: #3a78d2;
}

.ruler-row {
  display: flex;
  align-items: flex-start;
  height: 28px;
  padding-top: 3px;
  background-color: #ccd0d5;
}

.tab-stop {
  width: 24px;
  height: 24px;
  border: 1px solid #868b93;
  outline: 3px solid #d5d8dd;
  outline-offset: -5px;
  background-color: #fff;
  color: #444;
  font: bold 12px/22px "Liberation Sans", sans-serif;
  text-align: center;
}

.ruler-wrap {
  flex: 1;
  display: flex;
  justify-content: center;
}

.ruler-num {
  font: 10px "Open Sans", sans-serif;
  fill: #444;
  text-anchor: middle;
}

.workspace {
  flex: 1;
  display: flex;
  min-height: 0;
}

.v-ruler {
  width: 24px;
  padding: 416px 5px 0;
  background-color: #ccd0d5;
}

.v-margin,
.v-body {
  height: 119px;
  border: 1px solid #868b93;
  background: repeating-linear-gradient(transparent 0, transparent 13px, #555 13px, #555 14px) 6px 0 / 2px 100% no-repeat, #c3c8ce;
}

.v-body {
  height: 60px;
  border-top: none;
  background-color: #f7f7f7;
}

.canvas {
  flex: 1;
  min-width: 0;
  overflow: hidden;
  background: linear-gradient(#cdd1d6, #b6b9be);
}

.page {
  width: 979px;
  margin: 0 auto;
  background-color: #fff;
  box-shadow: 0 0 10px 2px rgba(70, 75, 82, 0.8);
}

.page-one {
  padding: 0 116px 46px 103px;
}

.page-two {
  height: 180px;
  margin-top: 17px;
}

.changed {
  border-left: 1px solid #000;
  padding: 0 0 38px 11px;
}

.figure {
  border-bottom: 1px solid #00f;
  padding: 0 6px 1px 10px;
}

.shot {
  border-left: 2px solid #8a7360;
  border-right: 3px solid #735638;
  padding: 0 9px 0 8px;
}

.shot-body {
  background-color: #fc9;
}

.page-footer {
  display: grid;
  grid-template-columns: 1fr auto 1fr;
  margin-top: 147px;
  padding-left: 12px;
  font: 16px/18px "Liberation Serif", serif;
  color: #808080;
}

.footer-date {
  text-align: right;
}

.word-scroll {
  width: 17px;
  display: flex;
  flex-direction: column;
  align-items: center;
  background-color: #dfe3ea;
}

.tri-up,
.tri-down {
  border: 5px solid transparent;
  border-bottom: 5px solid #444;
  border-top: none;
  margin: 6px 0 148px;
}

.tri-down {
  border-top: 5px solid #444;
  border-bottom: none;
  margin: auto 0 8px;
}

.word-thumb {
  width: 16px;
  height: 17px;
  padding: 4px 3px;
  border: 1px solid #7e8590;
  background-color: #f2f4f7;
}

.word-thumb i {
  display: block;
  height: 7px;
  background: repeating-linear-gradient(#777 0, #777 1px, transparent 1px, transparent 2px);
}

.statusbar {
  display: flex;
  align-items: center;
  height: 23px;
  border-top: 1px solid #868b93;
  border-bottom: 1px solid #a5a9ae;
  background: linear-gradient(#e3e6ea, #c3c7cd);
  color: #333;
}

.stat {
  height: 20px;
  line-height: 20px;
  padding: 0 10px 0 9px;
  border-right: 1px solid #8d9299;
}

.stat-icon {
  padding-top: 2px;
  padding-left: 8px;
}

.views {
  margin-left: auto;
  display: flex;
  align-items: center;
  height: 20px;
  padding-left: 5px;
  border-left: 1px solid #8d9299;
}

.view {
  width: 18px;
  height: 18px;
  display: flex;
  align-items: center;
  justify-content: center;
  border: 1px solid transparent;
}

.view.on {
  border-color: #c28a30;
  border-radius: 2px;
  background-color: #ffdf7e;
}

.zoom-text {
  margin: 0 8px 0 10px;
}

.round {
  width: 16px;
}

.zoom-range {
  appearance: none;
  width: 100px;
  height: 15px;
  background: linear-gradient(#85898f, #85898f) 0 7px / 100% 1px no-repeat;
}

.zoom-range::-webkit-slider-thumb {
  appearance: none;
  width: 9px;
  height: 12px;
  border: 1px solid #666;
  border-radius: 0 0 4px 4px;
  background-color: #f4f5f6;
}

.views .round:last-child {
  margin-right: 4px;
}

/* Browser */
.browser {
  flex: 1;
  display: flex;
  flex-direction: column;
  min-height: 0;
}

.chrome {
  color: #111;
  background:
    linear-gradient(90deg, rgba(240, 230, 160, 0.4) 15px, transparent 40px, transparent 90px, rgba(190, 215, 215, 0.3) 110px, transparent 140px, rgba(190, 215, 190, 0.3) 190px, transparent 230px),
    linear-gradient(#56699a, #8196b4 22px, #9cadc3 36px, #92a3bd 52px);
}

.menu-row {
  display: flex;
  align-items: flex-start;
  justify-content: space-between;
  height: 24px;
}

.menu {
  display: flex;
  gap: 12px;
  height: 20px;
  padding: 0 6px;
  line-height: 19px;
  background-color: rgba(232, 238, 246, 0.75);
  border-radius: 0 0 4px 0;
}

.menu a {
  color: #111;
  text-decoration: none;
}

.aero {
  display: flex;
  height: 18px;
  margin-right: 3px;
  border: 1px solid #34435f;
  border-top: none;
  border-radius: 0 0 5px 5px;
  overflow: hidden;
}

.aero button {
  width: 28px;
  display: flex;
  align-items: center;
  justify-content: center;
  border-right: 1px solid #46556f;
  background: linear-gradient(#b6c2d4, #8090ae 50%, #506488 50%, #7f93b4);
}

.aero .aero-close {
  width: 47px;
  border-right: none;
  background: linear-gradient(#d9a297, #cb6a56 50%, #b02f17 50%, #cf6c50);
}

.tabs {
  display: flex;
  height: 29px;
  border-bottom: 1px solid #5d6f8e;
}

.tab {
  position: relative;
  display: flex;
  align-items: center;
  gap: 6px;
}

.tab span {
  position: relative;
  flex: 1;
  white-space: nowrap;
}

.tab-one {
  width: 225px;
  padding: 0 11px 0 24px;
  border-right: 1px solid #6b7b97;
}

.tab-two {
  width: 206px;
  padding: 0 7px 0 9px;
}

.tab-current {
  width: 226px;
  padding: 0 24px 0 13px;
}

.tab-shape {
  position: absolute;
  top: 0;
  left: 0;
}

.close {
  position: relative;
  padding: 0;
}

.close path {
  stroke: #5b6880;
  stroke-width: 2;
}

.navbar {
  position: relative;
  display: flex;
  align-items: center;
  height: 41px;
  padding: 0 12px 0 4px;
  background: linear-gradient(#ecf3fb, #d9e7f7);
  border-bottom: 1px solid #a3b9d3;
}

.back {
  position: relative;
  width: 32px;
  height: 32px;
  display: flex;
  align-items: center;
  justify-content: center;
  border: 1px solid #8fa3be;
  border-radius: 50%;
  background-color: #f6f9fc;
}

.urlbar {
  flex: 1;
  min-width: 0;
  height: 24px;
  margin-left: -4px;
  padding: 0 6px 0 9px;
  display: flex;
  align-items: center;
  gap: 7px;
  border: 1px solid #a9b9cf;
  border-left: none;
  border-radius: 0 2px 2px 0;
  background-color: #fff;
  color: #808080;
}

.url {
  flex: 1;
  overflow: hidden;
  white-space: nowrap;
}

.url b {
  font-weight: normal;
  color: #111;
}

.searchbar {
  width: 245px;
  height: 24px;
  margin-left: 7px;
  padding: 0 6px;
  display: flex;
  align-items: center;
  gap: 5px;
  border: 1px solid #a9b9cf;
  border-radius: 2px;
  background-color: #fff;
}

.searchbar input {
  flex: 1;
  min-width: 0;
  padding: 0;
  border: none;
  outline: none;
  background: none;
}

.searchbar input::placeholder {
  color: #666;
  font-style: italic;
}

.nav-icons {
  width: 196px;
  margin-left: 12px;
  display: flex;
  align-items: center;
  justify-content: space-between;
}

.nav-sep {
  width: 1px;
  height: 18px;
  margin: 0 -8px;
  background-color: #b3c3d8;
}

.nav-clip {
  margin: 0 5px 0 -5px;
}

.nav-sep.tall {
  height: 38px;
}

.viewport {
  flex: 1;
  min-height: 0;
  display: flex;
  background-color: #ccc;
}

.sheet {
  width: 765px;
  margin: 0 auto;
  padding: 0 24px 0 22px;
  background-color: #fff;
  overflow: hidden;
  color: #000;
  font: 11px/14px "DejaVu Sans", Verdana, sans-serif;
}

.frame {
  min-height: 100%;
  padding: 0 8px;
  border-left: 2px solid #735638;
  border-right: 3px solid #735638;
}

.assist {
  margin: 0 0 24px;
  padding: 7px 0 6px;
  border: none;
  background-color: #fc9;
}

.field {
  display: grid;
  grid-template-columns: 197px 1fr;
  column-gap: 10px;
  align-items: start;
  justify-items: start;
  padding-bottom: 10px;
}

.field.mid {
  align-items: center;
}

.field > label,
.label {
  justify-self: end;
  padding-left: 4px;
  text-align: right;
}

.field label svg {
  display: inline-block;
}

.field small {
  display: block;
  padding-left: 30px;
  font-size: 10px;
  line-height: 12px;
}

.shot-field {
  grid-template-columns: 200px 1fr;
  padding: 0;
  color: #222;
  font: 11px/15px "DejaVu Sans", Verdana, sans-serif;
}

.doc-input {
  width: 393px;
  height: 16px;
  margin-top: 23px;
  border: none;
  border-top: 2px solid #c4c4c4;
  background-color: #fff;
}

.shot-field:last-child {
  align-items: end;
}

.sheet input[type="text"],
textarea {
  display: block;
  height: 19px;
  padding: 0 3px;
  background-color: #fff;
  border: 1px solid #e2e3ea;
  border-top-color: #abadb3;
  border-radius: 2px;
  font: 11px "Liberation Sans", Arial, sans-serif;
}

.field > div > textarea {
  width: 387px;
  height: 88px;
}

.counter {
  display: flex;
  align-items: center;
  gap: 4px;
  padding-top: 1px;
}

.counter input[type="text"] {
  width: 28px;
  height: 15px;
  padding: 0 1px;
  border: none;
  border-radius: 0;
}

.w-amount { width: 37px; }
.w-duration { width: 27px; }
.w-id { width: 67px; }
.w-type { width: 188px; }
.w-other { width: 167px; }
.w-date { width: 117px; }
.w-inst { width: 242px; }
.w-total { width: 42px; }
.w-post { width: 213px; }
.w-property { width: 145px; }
.w-drug { width: 205px; }
.w-order { width: 148px; }
.w-spec { width: 192px; }

.sheet input.focused {
  border-color: #b5cfe7;
  border-top-color: #5794bf;
}

.listbox {
  display: flex;
  width: 269px;
  border: 1px solid #828790;
  background-color: #fff;
}

.listbox select {
  flex: 1;
  min-width: 0;
  padding: 1px 0;
  border: none;
  outline: none;
  overflow: hidden;
  background: none;
  color: #333;
  font: 10px "Liberation Sans", Arial, sans-serif;
}

.listbox option {
  height: 13px;
  min-height: 13px;
  line-height: 13px;
  padding: 0 3px;
}

.listbox.cut-top {
  border-top: none;
}

.list-scroll {
  width: 17px;
  padding: 9px 0;
  display: flex;
  flex-direction: column;
  align-items: center;
  justify-content: space-between;
  background-color: #efefef;
}

.arrow-up {
  border: 3px solid transparent;
  border-top: none;
  border-bottom: 4px solid #777;
}

.arrow-down {
  border: 3px solid transparent;
  border-bottom: none;
  border-top: 4px solid #777;
}

.note {
  font: italic 11px/14px "Open Sans", sans-serif;
  color: #000;
}

.section-title {
  margin-bottom: 6px;
  padding-left: 5px;
  background-color: #f5f5e6;
  font: bold 11px/24px "Open Sans", sans-serif;
}

.required {
  padding-left: 5px;
  font: bold 11px/14px "Open Sans", sans-serif;
}

.required svg {
  display: inline-block;
}

.drop {
  appearance: none;
  display: block;
  height: 17px;
  padding: 0 4px;
  border: 1px solid #e2e3ea;
  border-top-color: #abadb3;
  border-radius: 2px;
  background:
    linear-gradient(to top right, transparent 50%, #000 50%) right 7px top 8px / 4px 5px no-repeat,
    linear-gradient(to top left, transparent 50%, #000 50%) right 3px top 8px / 4px 5px no-repeat,
    #fff;
  color: #333;
  font: 10px "Liberation Sans", Arial, sans-serif;
}

.line {
  display: flex;
  align-items: center;
  gap: 1px;
  white-space: nowrap;
}

.spaced input {
  margin-right: 3px;
}

.radios {
  height: 19px;
  padding-left: 5px;
  gap: 14px;
}

.radios label {
  display: flex;
  align-items: flex-end;
  gap: 8px;
}

.radios input {
  appearance: none;
  width: 12px;
  height: 12px;
  margin-bottom: 4px;
  border: 1px solid #8e8f8f;
  border-radius: 50%;
  background: radial-gradient(#c9cdd0, #f4f4f4 80%);
}

.crimes {
  width: 478px;
  border-collapse: collapse;
  border: 1px solid #000;
  outline: 1px solid #888;
  outline-offset: -1px;
}

.crimes th,
.crimes td {
  border: 2px solid #000;
  border-top: 2px ridge #333;
  border-left: 1px solid #000;
  padding: 5px 4px;
  vertical-align: top;
}

.crimes th {
  width: 130px;
  height: 48px;
  padding: 6px 5px 5px;
  text-align: right;
  font-weight: normal;
  white-space: nowrap;
}

.crimes .last th {
  height: 28px;
}

.page-scroll {
  width: 17px;
  display: flex;
  flex-direction: column;
  align-items: center;
  padding: 7px 0;
  background-color: #f0f0f0;
  border-left: 1px solid #fff;
}

.page-scroll .arrow-up {
  border-bottom-color: #333;
}

.page-scroll .arrow-down {
  border-top-color: #333;
}

.before {
  flex: 508;
}

.after {
  flex: 175;
}

.page-thumb {
  flex: 184;
  width: 14px;
  border: 1px solid #979797;
  border-radius: 2px;
  background:
    repeating-linear-gradient(#666 0, #666 1px, transparent 1px, transparent 3px) center / 7px 7px no-repeat,
    linear-gradient(90deg, #f5f5f5, #cfcfd2);
}

/* Taskbar */
.taskbar {
  display: flex;
  align-items: center;
  height: 40px;
  border-top: 1px solid #6c6c60;
  background: linear-gradient(90deg, #3a3a3a, #1d1d1b 30%, #2e2c22 70%, #11110f 85%, #000);
}

.start {
  width: 54px;
  padding-left: 8px;
}

.task {
  width: 58px;
  height: 38px;
  margin-left: 4px;
  display: flex;
  align-items: center;
  justify-content: center;
  border: 1px solid #8a8a86;
  border-radius: 3px;
  background: linear-gradient(135deg, #8f8f8d, #4a4a46 50%, #33332f);
}

.task.flat {
  border-color: transparent;
  background: none;
}

.task.lit {
  background: linear-gradient(135deg, #d8d8d6, #8e8e8c);
}

.stack {
  width: 51px;
  margin-right: 7px;
  box-shadow: 3px 0 0 -1px #33332f, 4px 0 0 -1px #8a8a86, 7px 0 0 -2px #33332f, 8px 0 0 -2px #777;
}

.start + .task {
  margin-left: 6px;
}

.tray {
  margin-left: auto;
  align-self: stretch;
  display: flex;
  align-items: center;
  gap: 8px;
  color: #fff;
}

.tray-up {
  margin-right: 4px;
}

.clock {
  margin: 0 4px 0 8px;
  text-align: center;
  line-height: 17px;
}

.show-desktop {
  width: 13px;
  height: 38px;
  border: 1px solid #77776f;
  background: linear-gradient(#55554f, #1b1b18);
}
```
